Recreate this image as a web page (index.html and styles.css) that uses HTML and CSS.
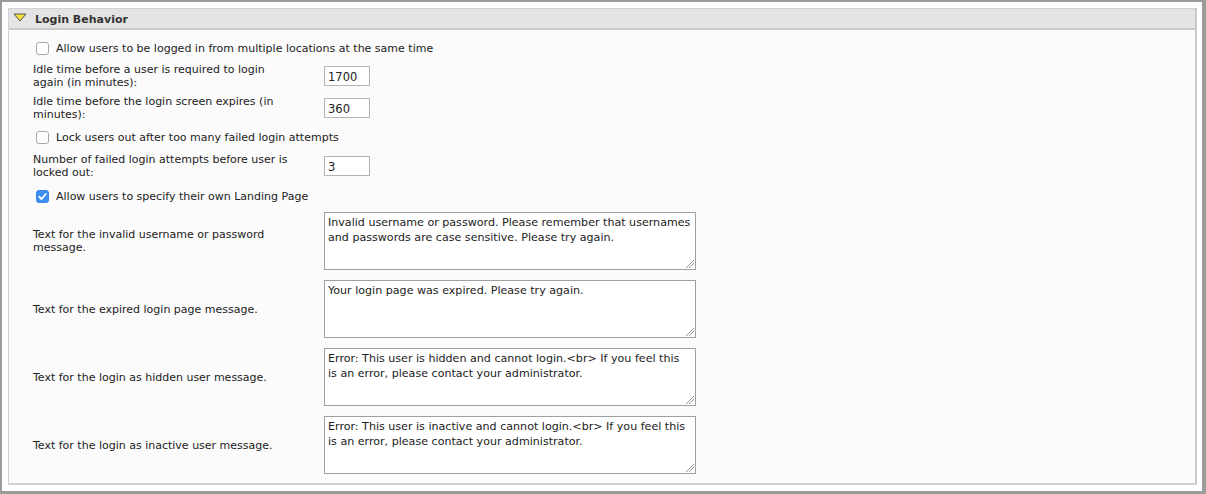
FILE: index.html
```html
<!DOCTYPE html>
<html>
<head>
<meta charset="utf-8">
<link rel="stylesheet" href="styles.css">
</head>
<body>
<div class="frame">
  <div class="panel">
    <div class="panel-head">
      <svg class="tri" width="14" height="9" viewBox="0 0 14 9"><polygon points="1,1 13,1 7,8" fill="#f4e13c" stroke="#555" stroke-width="1" stroke-linejoin="round"/></svg>
      <span class="title">Login Behavior</span>
    </div>
    <div class="panel-body">
      <div class="cb-row r-cb1"><span class="cb"></span><span>Allow users to be logged in from multiple locations at the same time</span></div>
      <div class="field-row r-f1"><div class="label">Idle time before a user is required to login again (in minutes):</div><div class="input">1700</div></div>
      <div class="field-row r-f2"><div class="label">Idle time before the login screen expires (in minutes):</div><div class="input">360</div></div>
      <div class="cb-row r-cb2"><span class="cb"></span><span>Lock users out after too many failed login attempts</span></div>
      <div class="field-row r-f3"><div class="label">Number of failed login attempts before user is locked out:</div><div class="input">3</div></div>
      <div class="cb-row r-cb3"><span class="cb checked"><svg width="13" height="13" viewBox="0 0 13 13"><path d="M3.3 6.8 L5.5 9 L9.8 4" fill="none" stroke="#fff" stroke-width="1.8" stroke-linecap="round" stroke-linejoin="round"/></svg></span><span>Allow users to specify their own Landing Page</span></div>
      <div class="ta-row r-t1"><div class="label">Text for the invalid username or password message.</div><div class="ta">Invalid username or password. Please remember that usernames and passwords are case sensitive. Please try again.<span class="grip"></span></div></div>
      <div class="ta-row"><div class="label">Text for the expired login page message.</div><div class="ta">Your login page was expired. Please try again.<span class="grip"></span></div></div>
      <div class="ta-row"><div class="label">Text for the login as hidden user message.</div><div class="ta">Error: This user is hidden and cannot login.&lt;br&gt; If you feel this is an error, please contact your administrator.<span class="grip"></span></div></div>
      <div class="ta-row"><div class="label">Text for the login as inactive user message.</div><div class="ta">Error: This user is inactive and cannot login.&lt;br&gt; If you feel this is an error, please contact your administrator.<span class="grip"></span></div></div>
    </div>
  </div>
</div>
</body>
</html>
```
FILE: styles.css
```css
* { box-sizing: border-box; }
html, body { margin: 0; padding: 0; }
body {
  font-family: "DejaVu Sans", Verdana, sans-serif;
  font-size: 11px;
  color: #222;
  background: #fff;
}
.frame {
  width: 1206px;
  height: 494px;
  border-style: solid;
  border-color: #9b9b9b;
  border-width: 2px 4px 3px 2px;
  background: #fff;
  padding: 6px 5px 6px 6px;
}
.panel {
  height: 100%;
  border: 1px solid #d2d2d2;
  border-right: 2px solid #c9c9c9;
  border-bottom: 2px solid #d0d0d0;
  background: #fbfbfb;
}
.panel-head {
  height: 21px;
  background: #e4e4e4;
  border-bottom: 2px solid #cbcbcb;
  display: flex;
  align-items: center;
  padding-left: 4px;
  padding-top: 1px;
}
.tri { display: block; margin-right: 8px; margin-top: -4px; }
.title { font-weight: bold; font-size: 11px; color: #333; }
.panel-body {
  padding: 10px 0 0 24px;
  display: flex;
  flex-direction: column;
}
.cb-row {
  display: flex;
  align-items: center;
  height: 16px;
  padding-left: 3px;
}
.cb {
  width: 13px;
  height: 13px;
  border: 1px solid #a8a8a8;
  border-radius: 3px;
  background: #fff;
  margin-right: 7px;
  flex: none;
  display: flex;
}
.cb.checked { background: #3d8ff4; border-color: #3a86e6; }
.cb.checked svg { margin: -1px; }
.field-row {
  display: flex;
  align-items: center;
  height: 26px;
}
.label {
  width: 291px;
  line-height: 13px;
  padding-right: 28px;
  flex: none;
}
.input {
  width: 46px;
  height: 20px;
  border: 1px solid #b4b4b4;
  background: #fff;
  padding: 3px 0 0 3px;
  font-size: 11.5px;
}
.r-f1 { margin-top: 7px; }
.r-f2 { margin-top: 6px; }
.r-cb2 { margin-top: 8px; }
.r-f3 { margin-top: 8px; }
.r-cb3 { margin-top: 9px; }
.r-t1 { margin-top: 8px !important; }
.ta-row {
  display: flex;
  align-items: center;
  margin-top: 10px;
}
.ta {
  position: relative;
  width: 372px;
  height: 58px;
  border: 1px solid #a0a0a0;
  background: #fff;
  padding: 2px 4px 2px 3px;
  font-size: 11.1px;
  line-height: 15px;
}
.grip {
  position: absolute;
  right: 1px;
  bottom: 1px;
  width: 8px;
  height: 8px;
  background: linear-gradient(135deg, transparent 0 45%, #999 45% 52%, transparent 52% 68%, #999 68% 75%, transparent 75%);
}
```
